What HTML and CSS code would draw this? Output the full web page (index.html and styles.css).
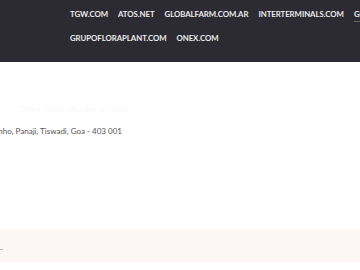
FILE: index.html
```html
<!DOCTYPE html>
<html lang="en">
<head>
    <meta charset="UTF-8">
    <meta name="viewport" content="width=device-width, initial-scale=1.0">
    <title>Partners</title>
    <link rel="stylesheet" href="styles.css">
</head>
<body>
    <header class="topbar">
        <nav class="partners">
            <a href="#">TGW.COM</a>
            <a href="#">ATOS.NET</a>
            <a href="#">GLOBALFARM.COM.AR</a>
            <a href="#">INTERTERMINALS.COM</a>
            <a href="#" class="active">GOOGLE.COM</a>
            <a href="#">GRUPOFLORAPLANT.COM</a>
            <a href="#">ONEX.COM</a>
        </nav>
    </header>
    <main class="contact">
        <p class="faint">Office hours: Monday to Friday</p>
        <p class="address">Altinho, Panaji, Tiswadi, Goa - 403 001</p>
    </main>
    <section class="band">
        <span class="tick"></span>
    </section>
</body>
</html>
```

FILE: styles.css
```css
body {
    margin: 0;
    padding: 0;
    font-family: Lato, "Open Sans", sans-serif;
    background: #fff;
    overflow: hidden;
}

.topbar {
    background: #2c2a33;
    height: 62px;
    overflow: hidden;
}

.partners {
    display: flex;
    flex-wrap: wrap;
    column-gap: 10px;
    width: 350px;
    padding: 2px 0 0 70px;
}

.partners a {
    color: #ececec;
    text-decoration: none;
    font-size: 7.8px;
    font-weight: 700;
    line-height: 24px;
    letter-spacing: -0.05px;
    white-space: nowrap;
}

.partners a.active {
    text-decoration: underline;
    text-underline-offset: 4px;
    text-decoration-color: #666;
}

.contact {
    height: 168px;
    padding-top: 40px;
    box-sizing: border-box;
}

.contact p {
    margin: 0;
    font-size: 8px;
}

.faint {
    color: #f9f9f9;
    line-height: 14px;
    margin-left: 20px !important;
}

.address {
    color: #555;
    line-height: 14px;
    margin: 8px 0 0 -14px !important;
}

.band {
    background: #fcf6f4;
    height: 32px;
    display: flex;
    align-items: center;
}

.tick {
    display: block;
    width: 3px;
    height: 1px;
    background: #bbb;
    margin-top: 6px;
}
```
